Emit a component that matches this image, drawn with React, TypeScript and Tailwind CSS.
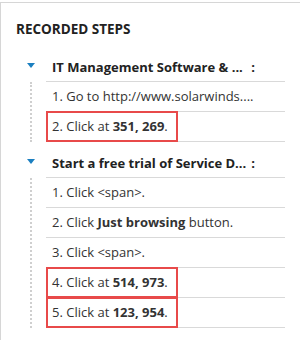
import { FC, ReactNode } from "react";

type Step = { content: ReactNode; hot?: boolean };

const groups: { title: string; steps: Step[] }[] = [
  {
    title: "IT Management Software & ...",
    steps: [
      { content: <>1. Go to http://www.solarwinds....</> },
      { content: <>2. Click at <b>351, 269</b>.</>, hot: true },
    ],
  },
  {
    title: "Start a free trial of Service D...",
    steps: [
      { content: <>1. Click &lt;span&gt;.</> },
      { content: <>2. Click <b>Just browsing</b> button.</> },
      { content: <>3. Click &lt;span&gt;.</> },
      { content: <>4. Click at <b>514, 973</b>.</>, hot: true },
      { content: <>5. Click at <b>123, 954</b>.</>, hot: true },
    ],
  },
];

const StepRow: FC<{ step: Step }> = ({ step }) => (
  <div className="flex h-[30px] items-stretch border-b border-[#d9d9d9]">
    {step.hot ? (
      <div className="-mt-px flex h-[31px] items-center border-2 border-[#e84a4a] pl-1 pr-2">
        <span>{step.content}</span>
      </div>
    ) : (
      <div className="flex items-center pl-1.5">
        <span>{step.content}</span>
      </div>
    )}
  </div>
);

const App: FC = () => {
  return (
    <div
      className="h-[340px] w-[300px] bg-white pt-[2px] text-[13px] text-[#333]"
      style={{ fontFamily: '"Open Sans", "Liberation Sans", sans-serif' }}
    >
      <div className="h-[338px] border-l border-t border-[#d6d6d6] pr-[15px]">
        <h2 className="pl-[15px] pt-[17px] text-[13.5px] font-bold leading-[18px] text-[#222]">
          RECORDED STEPS
        </h2>
        <div className="mt-[8px]">
          {groups.map((g) => (
            <div key={g.title}>
              <div className="flex">
                <div className="w-[45px] shrink-0">
                  <div className="ml-[26px] mt-[17px] h-0 w-0 border-x-4 border-t-[5px] border-x-transparent border-t-[#1b7fc0]" />
                </div>
                <div className="flex flex-1 border-b border-[#d9d9d9] pb-[5px] pl-1.5 pr-[30px] pt-[12px] font-bold leading-[18px] text-[#222]">
                  <span className="flex-1">{g.title}</span>
                  <span>:</span>
                </div>
              </div>
              <div className="flex">
                <div className="w-[45px] shrink-0">
                  <div className="ml-[29px] h-full border-l-2 border-dotted border-[#cfcfcf]" />
                </div>
                <div className="flex-1">
                  {g.steps.map((s, i) => (
                    <StepRow key={i} step={s} />
                  ))}
                </div>
              </div>
            </div>
          ))}
        </div>
      </div>
    </div>
  );
};

export default App;
